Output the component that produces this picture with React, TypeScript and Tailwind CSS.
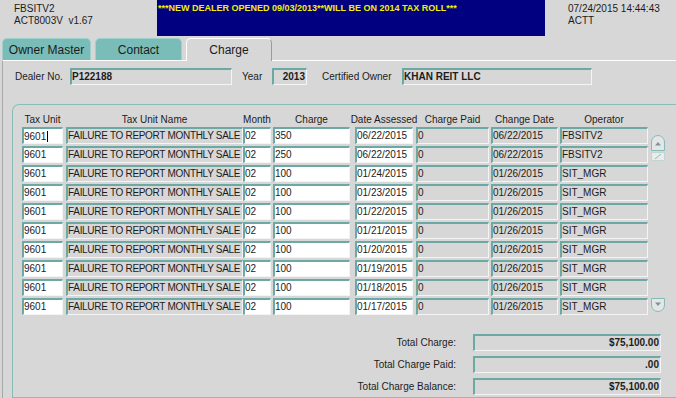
import clsx from "clsx"

interface ChargeRow {
  charge: string
  assessed: string
  changed: string
  operator: string
}

const rows: ChargeRow[] = [
  { charge: "350", assessed: "06/22/2015", changed: "06/22/2015", operator: "FBSITV2" },
  { charge: "250", assessed: "06/22/2015", changed: "06/22/2015", operator: "FBSITV2" },
  { charge: "100", assessed: "01/24/2015", changed: "01/26/2015", operator: "SIT_MGR" },
  { charge: "100", assessed: "01/23/2015", changed: "01/26/2015", operator: "SIT_MGR" },
  { charge: "100", assessed: "01/22/2015", changed: "01/26/2015", operator: "SIT_MGR" },
  { charge: "100", assessed: "01/21/2015", changed: "01/26/2015", operator: "SIT_MGR" },
  { charge: "100", assessed: "01/20/2015", changed: "01/26/2015", operator: "SIT_MGR" },
  { charge: "100", assessed: "01/19/2015", changed: "01/26/2015", operator: "SIT_MGR" },
  { charge: "100", assessed: "01/18/2015", changed: "01/26/2015", operator: "SIT_MGR" },
  { charge: "100", assessed: "01/17/2015", changed: "01/26/2015", operator: "SIT_MGR" },
]

// column widths + left gaps, in page pixels
const cols = [
  { title: "Tax Unit", cls: "w-[41px]" },
  { title: "Tax Unit Name", cls: "ml-[3px] w-[177px]" },
  { title: "Month", cls: "w-[28px]" },
  { title: "Charge", cls: "ml-[2px] w-[77px]" },
  { title: "Date Assessed", cls: "ml-[5px] w-[58px]" },
  { title: "Charge Paid", cls: "ml-[3px] w-[73px]" },
  { title: "Change Date", cls: "ml-[2px] w-[67px]" },
  { title: "Operator", cls: "ml-[2px] w-[88px]" },
]

function Field({
  value,
  white,
  bold,
  right,
  className,
  children,
}: {
  value?: string
  white?: boolean
  bold?: boolean
  right?: boolean
  className?: string
  children?: React.ReactNode
}) {
  return (
    <div
      className={clsx(
        "h-[17px] shrink-0 overflow-hidden whitespace-nowrap border-t-2 border-l-2 border-r border-b border-t-[#6da9a4] border-l-[#6da9a4] border-r-[#f4f4f4] border-b-[#f4f4f4] leading-[14px]",
        white ? "bg-white" : "bg-[#d7d7d7]",
        bold && "font-bold",
        right && "pr-[1px] text-right",
        className,
      )}
    >
      {value}
      {children}
    </div>
  )
}

function ScrollUp() {
  return (
    <div className="flex flex-col">
      <svg width="14" height="16" viewBox="0 0 14 16">
        <path d="M0.5 15.5 V7 A6.5 6.5 0 0 1 13.5 7 V15.5 Z" fill="#e2e6e6" stroke="#86bab6" />
        <path d="M4 10.5 L7 7 L10 10.5 Z" fill="#7d9393" />
      </svg>
      <svg width="14" height="9" viewBox="0 0 14 9" className="mt-[1px]">
        <rect x="0.5" y="0.5" width="13" height="8" fill="#e8ecec" stroke="#c4d4d3" />
        <path d="M4 7 L10 2" stroke="#9fb4b3" strokeWidth="1" />
      </svg>
    </div>
  )
}

function ScrollDown() {
  return (
    <svg width="14" height="14" viewBox="0 0 14 14">
      <path d="M0.5 0.5 V7 A6.5 6.5 0 0 0 13.5 7 V0.5 Z" fill="#e2e6e6" stroke="#86bab6" />
      <path d="M4 4.5 L7 8 L10 4.5 Z" fill="#7d9393" />
    </svg>
  )
}

export default function App() {
  return (
    <div className="flex h-[398px] w-[676px] flex-col overflow-hidden bg-[#d7d7d7] font-['Liberation_Sans',Arial,sans-serif] text-[10px] text-[#1c1c1c]">
      {/* Header */}
      <div className="flex h-[36px] shrink-0">
        <div className="w-[157px] pl-[14px] pt-[3px] leading-[12px]">
          <div>FBSITV2</div>
          <div>ACT8003V&nbsp;&nbsp;v1.67</div>
        </div>
        <div className="w-[388px] bg-[#000080] pl-[1px] pt-[3px] text-[9px] font-bold leading-[11px] text-[#f2f200]">
          ***NEW DEALER OPENED 09/03/2013**WILL BE ON 2014 TAX ROLL***
        </div>
        <div className="pl-[23px] pt-[3px] leading-[12px]">
          <div>07/24/2015 14:44:43</div>
          <div>ACTT</div>
        </div>
      </div>

      {/* Tabs */}
      <div className="mt-[2px] flex h-[22px] shrink-0 items-end pl-[2px] text-[12px]">
        <div className="flex h-[22px] w-[89px] items-center justify-center rounded-t-[5px] border border-b-0 border-[#9fd0cc] bg-[#79bcb8]">
          Owner Master
        </div>
        <div className="ml-[4px] flex h-[22px] w-[87px] items-center justify-center rounded-t-[5px] border border-b-0 border-[#9fd0cc] bg-[#79bcb8]">
          Contact
        </div>
        <div className="relative z-10 -mb-[1px] ml-[4px] flex h-[23px] w-[86px] items-center justify-center rounded-t-[5px] border-t border-l border-r border-t-white border-l-white border-r-[#9a9a9a] bg-[#d7d7d7] pb-[1px]">
          Charge
        </div>
      </div>

      {/* Panel */}
      <div className="ml-[2px] flex flex-1 flex-col border-l border-t border-l-[#a9a9a9] border-t-white">
        <div className="mt-[7px] flex items-center pl-[12px]">
          <div className="w-[55px]">Dealer No.</div>
          <Field value="P122188" bold className="w-[162px]" />
          <div className="ml-[10px] w-[30px]">Year</div>
          <Field value="2013" bold right className="w-[35px]" />
          <div className="ml-[15px] w-[80px]">Certified Owner</div>
          <Field value="KHAN REIT LLC" bold className="w-[190px]" />
        </div>

        {/* Charges group */}
        <div className="ml-[9px] mt-[19px] h-[294px] w-[680px] rounded-tl-[7px] border-l border-t border-b border-[#88bdb9] pl-[9px] pt-[9px]">
          <div className="flex">
            <div className="flex flex-col">
              <div className="flex h-[12px] leading-[12px]">
                {cols.map((c) => (
                  <div key={c.title} className={clsx("flex shrink-0 justify-center overflow-visible whitespace-nowrap", c.cls)}>
                    {c.title}
                  </div>
                ))}
              </div>
              <div className="mt-[1px] flex flex-col gap-[2px]">
                {rows.map((r, i) => (
                  <div key={i} className="flex">
                    <Field white className={cols[0].cls}>
                      9601
                      {i === 0 && <span className="ml-[1px] inline-block h-[11px] w-[1px] translate-y-[2px] bg-black" />}
                    </Field>
                    <Field value="FAILURE TO REPORT MONTHLY SALE" className={clsx(cols[1].cls, "tracking-[-0.3px]")} />
                    <Field value="02" white className={cols[2].cls} />
                    <Field value={r.charge} white className={cols[3].cls} />
                    <Field value={r.assessed} white className={cols[4].cls} />
                    <Field value="0" className={cols[5].cls} />
                    <Field value={r.changed} className={cols[6].cls} />
                    <Field value={r.operator} className={cols[7].cls} />
                  </div>
                ))}
              </div>
            </div>
            <div className="ml-[3px] flex flex-col justify-between pb-[3px] pt-[21px]">
              <ScrollUp />
              <ScrollDown />
            </div>
          </div>

          {/* Totals */}
          <div className="mt-[19px] flex flex-col gap-[5px]">
            {[
              ["Total Charge:", "$75,100.00"],
              ["Total Charge Paid:", ".00"],
              ["Total Charge Balance:", "$75,100.00"],
            ].map(([label, value]) => (
              <div key={label} className="flex items-center">
                <div className="w-[434px] text-right">{label}</div>
                <Field value={value} bold right className="ml-[17px] w-[188px]" />
              </div>
            ))}
          </div>
        </div>
      </div>
    </div>
  )
}
